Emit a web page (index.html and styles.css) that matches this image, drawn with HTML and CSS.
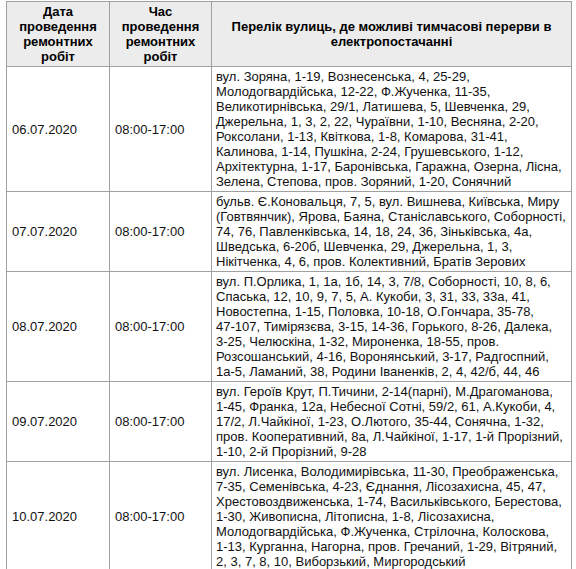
FILE: index.html
```html
<!DOCTYPE html>
<html lang="uk">
<head>
<meta charset="utf-8">
<title>Графік відключень</title>
<link rel="stylesheet" href="styles.css">
</head>
<body>
<table class="schedule">
  <colgroup>
    <col class="c-date">
    <col class="c-time">
    <col class="c-streets">
  </colgroup>
  <thead>
    <tr>
      <th>Дата<br>проведення<br>ремонтних<br>робіт</th>
      <th>Час<br>проведення<br>ремонтних<br>робіт</th>
      <th>Перелік вулиць, де можливі тимчасові перерви в<br>електропостачанні</th>
    </tr>
  </thead>
  <tbody>
    <tr>
      <td>06.07.2020</td>
      <td>08:00-17:00</td>
      <td class="streets">вул. Зоряна, 1-19, Вознесенська, 4, 25-29,<br>Молодогвардійська, 12-22, Ф.Жученка, 11-35,<br>Великотирнівська, 29/1, Латишева, 5, Шевченка, 29,<br>Джерельна, 1, 3, 2, 22, Чураївни, 1-10, Весняна, 2-20,<br>Роксолани, 1-13, Квіткова, 1-8, Комарова, 31-41,<br>Калинова, 1-14, Пушкіна, 2-24, Грушевського, 1-12,<br>Архітектурна, 1-17, Баронівська, Гаражна, Озерна, Лісна,<br>Зелена, Степова, пров. Зоряний, 1-20, Сонячний</td>
    </tr>
    <tr>
      <td>07.07.2020</td>
      <td>08:00-17:00</td>
      <td class="streets">бульв. Є.Коновальця, 7, 5, вул. Вишнева, Київська, Миру<br>(Говтвянчик), Ярова, Баяна, Станіславського, Соборності,<br>74, 76, Павленківська, 14, 18, 24, 36, Зіньківська, 4а,<br>Шведська, 6-20б, Шевченка, 29, Джерельна, 1, 3,<br>Нікітченка, 4, 6, пров. Колективний, Братів Зерових</td>
    </tr>
    <tr>
      <td>08.07.2020</td>
      <td>08:00-17:00</td>
      <td class="streets">вул. П.Орлика, 1, 1а, 1б, 14, 3, 7/8, Соборності, 10, 8, 6,<br>Спаська, 12, 10, 9, 7, 5, А. Кукоби, 3, 31, 33, 33а, 41,<br>Новостепна, 1-15, Половка, 10-18, О.Гончара, 35-78,<br>47-107, Тимірязєва, 3-15, 14-36, Горького, 8-26, Далека,<br>3-25, Челюскіна, 1-32, Мироненка, 18-55, пров.<br>Розсошанський, 4-16, Воронянський, 3-17, Радгоспний,<br>1а-5, Ламаний, 38, Родини Іваненків, 2, 4, 42/б, 44, 46</td>
    </tr>
    <tr>
      <td>09.07.2020</td>
      <td>08:00-17:00</td>
      <td class="streets">вул. Героїв Крут, П.Тичини, 2-14(парні), М.Драгоманова,<br>1-45, Франка, 12а, Небесної Сотні, 59/2, 61, А.Кукоби, 4,<br>17/2, Л.Чайкіної, 1-23, О.Лютого, 35-44, Сонячна, 1-32,<br>пров. Кооперативний, 8а, Л.Чайкіної, 1-17, 1-й Прорізний,<br>1-10, 2-й Прорізний, 9-28</td>
    </tr>
    <tr>
      <td>10.07.2020</td>
      <td>08:00-17:00</td>
      <td class="streets">вул. Лисенка, Володимирівська, 11-30, Преображенська,<br>7-35, Семенівська, 4-23, Єднання, Лісозахисна, 45, 47,<br>Хрестовоздвиженська, 1-74, Васильківського, Берестова,<br>1-30, Живописна, Літописна, 1-8, Лісозахисна,<br>Молодогвардійська, Ф.Жученка, Стрілочна, Колоскова,<br>1-13, Курганна, Нагорна, пров. Гречаний, 1-29, Вітряний,<br>2, 3, 7, 8, 10, Виборзький, Миргородський</td>
    </tr>
  </tbody>
</table>
</body>
</html>
```

FILE: styles.css
```css
html, body {
  margin: 0;
  padding: 0;
  background: #ffffff;
}

body {
  font-family: "Liberation Sans", Arial, sans-serif;
  font-size: 13px;
  line-height: 15px;
  color: #111111;
}

.schedule {
  border-collapse: collapse;
  table-layout: fixed;
  width: 565px;
  margin: 1px 0 0 6px;
}

.c-date { width: 103px; }
.c-time { width: 102px; }
.c-streets { width: 360px; }

.schedule th,
.schedule td {
  border: 1px solid #a0a0a0;
  padding: 2px 5px;
  vertical-align: middle;
  text-align: left;
}

.schedule th {
  background: #ececec;
  font-weight: bold;
  text-align: center;
  color: #000000;
}

.schedule td.streets {
  padding-left: 4px;
  padding-right: 2px;
  white-space: nowrap;
}
```
